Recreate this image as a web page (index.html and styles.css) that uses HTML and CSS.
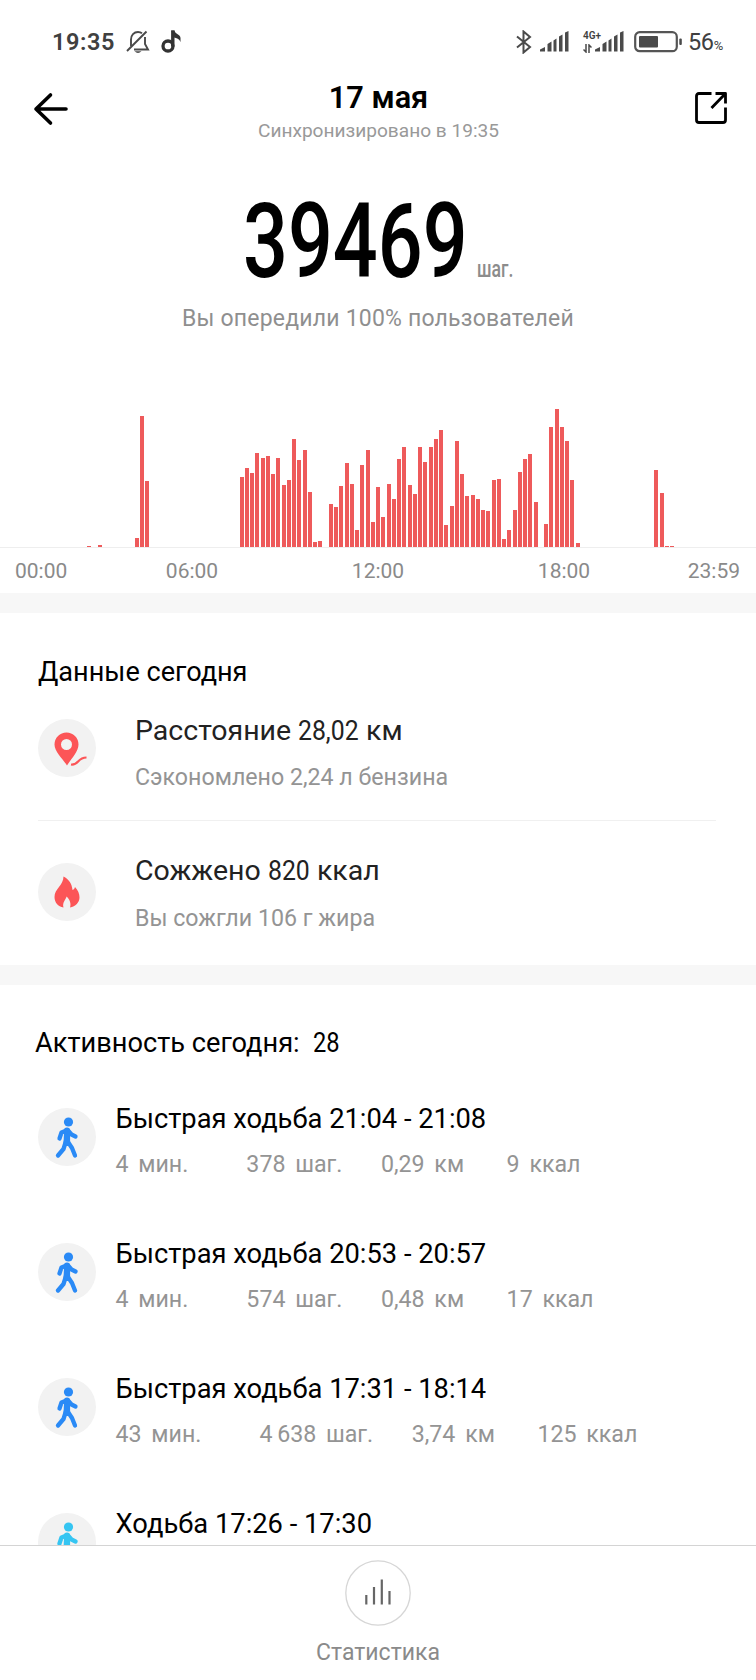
FILE: index.html
```
<!DOCTYPE html>
<html lang="ru">
  <head>
    <meta charset="UTF-8" />
    <meta name="viewport" content="width=device-width, initial-scale=1.0" />
    <title>Шаги</title>
    <link rel="stylesheet" href="styles.css">
  </head>
  <body>
    <!-- Shared icons -->
    <svg class="sprite" width="0" height="0">
      <symbol id="walk" viewBox="0 0 58 58">
        <circle cx="30.5" cy="14" r="4.6" fill="currentColor" />
        <path d="M26 21.5Q29 19.5 31.5 21.5L32 31L30 36H25.5L26 27Z" fill="currentColor" />
        <path d="M28.5 22.5L23.5 24.5L21.5 30.5M30 22.5L33.5 26.5L37.5 28.5M28 33L25.5 41L20 47.5M30 34L34 40L37 47.5" fill="none" stroke="currentColor" stroke-width="4.3" stroke-linecap="round" stroke-linejoin="round" />
        <path d="M29 22.5V35" stroke="currentColor" stroke-width="6.2" stroke-linecap="round" />
      </symbol>
      <symbol id="signal" viewBox="0 0 29 21">
        <path d="M0 20.5V18.5L5 16V20.5ZM7.5 20.5V13L11.5 10.5V20.5ZM13.5 20.5V9.5L16.5 7.5V20.5ZM19 20.5V5.5L22.5 3.5V20.5ZM25 20.5V1.5L28.5 0V20.5Z" fill="#4a4a4a" />
      </symbol>
    </svg>

    <div class="screen">
      <div class="status-bar">
        <span class="clock">19:35</span>
        <svg class="bell" width="24" height="24" viewBox="0 0 24 24" fill="none" stroke="#4a4a4a" stroke-width="1.9">
          <path d="M5 16V9.5C5 5 8 2 12 2C13.5 2 15 2.5 16 3.3M19 7V14L22 19.5H8" />
          <path d="M1 21L20.5 1.5" />
          <path d="M8.5 21.3H15.5Q12 24.6 8.5 21.3Z" fill="#4a4a4a" stroke="none" />
        </svg>
        <svg class="note" width="20" height="24" viewBox="0 0 20 24" fill="none" stroke="#333">
          <circle cx="7" cy="16" r="5" stroke-width="3.3" />
          <path d="M11.8 .5V16.5" stroke-width="3.4" />
          <path d="M10.2 .5H13.5C14 4 19.5 4.5 19.5 8V12C18.5 9 15.5 8 13 7.5Z" fill="#333" stroke="none" />
        </svg>
        <div class="status-right">
          <svg class="bluetooth" width="16" height="24" viewBox="0 0 16 24" fill="none" stroke="#4a4a4a" stroke-width="2">
            <path d="M1 6.5L14 17L7.5 22.5V1.5L14 7L1 17.5" />
          </svg>
          <svg class="signal" width="29" height="21"><use href="#signal" /></svg>
          <div class="network">
            <span>4G+</span>
            <svg width="9" height="9" viewBox="0 0 9 9" fill="none" stroke="#4a4a4a" stroke-width="1.5">
              <path d="M3 0V8L.5 5.5M6 9V1L8.5 3.5" />
            </svg>
          </div>
          <svg class="signal-second" width="29" height="21"><use href="#signal" /></svg>
          <svg class="battery" width="49" height="22" viewBox="0 0 49 22">
            <rect x="1.2" y="1.2" width="41.6" height="19" rx="4.5" fill="none" stroke="#555" stroke-width="2.2" />
            <rect x="5" y="5" width="19" height="11.5" rx="1" fill="#4a4a4a" />
            <rect x="45.3" y="7.5" width="2.5" height="6.5" rx="1" fill="#4a4a4a" />
          </svg>
          <span class="charge">56<small>%</small></span>
        </div>
      </div>

      <header class="header">
        <svg class="back" width="36" height="34" viewBox="0 0 36 34" fill="none" stroke="#000" stroke-width="3.6" stroke-linecap="round" stroke-linejoin="round">
          <path d="M17.5 3L3 17L17.5 31M3 17H33" />
        </svg>
        <div class="heading">
          <h1>17 мая</h1>
          <p>Синхронизировано в 19:35</p>
        </div>
        <svg width="34" height="34" viewBox="0 0 34 34" fill="none" stroke="#000" stroke-width="2.8" stroke-linejoin="round">
          <path d="M17.5 2.5H5Q2.5 2.5 2.5 5V29Q2.5 31.5 5 31.5H29Q31.5 31.5 31.5 29V16.5" />
          <path d="M21.5 2.5H31.5V12.5M31.5 2.5L17.5 17" />
        </svg>
      </header>

      <main class="content">
        <section class="summary">
          <div class="total">
            <span class="total-value">39469</span>
            <span class="total-unit">шаг.</span>
          </div>
          <p class="rank">Вы опередили 100% пользователей</p>
          <div class="chart"></div>
          <div class="hours">
            <span>00:00</span>
            <span>06:00</span>
            <span>12:00</span>
            <span>18:00</span>
            <span>23:59</span>
          </div>
        </section>

        <section class="today">
          <h2>Данные сегодня</h2>
          <div class="metric">
            <svg class="icon" width="58" height="58" viewBox="0 0 58 58">
              <path d="M29 46.5C25 40 16.5 33 16.5 25.5A12 12 0 0 1 40.5 25.5C40.5 33 33 40 29 46.5ZM28.5 20A5.5 5.5 0 1 0 28.5 31A5.5 5.5 0 1 0 28.5 20Z" fill="#fc5557" fill-rule="evenodd" />
              <path d="M33 45.5C41 46.5 39 38.5 48.5 38.5" fill="none" stroke="#fc5557" stroke-width="2.2" />
            </svg>
            <div>
              <h3>Расстояние <span class="distance">28,02</span> км</h3>
              <p>Сэкономлено 2,24 л бензина</p>
            </div>
          </div>
          <div class="metric">
            <svg class="icon" width="58" height="58" viewBox="0 0 58 58">
              <path d="M25.5 13.5C30.5 16 34 20.5 34.5 27C36 26.5 36.5 25.5 37 24C40 27 41.5 31 41.5 34.5C41.5 39.5 37.5 43.5 32 44.5C33.5 40.5 31.5 36 28.5 33.5C28 36.5 24 39.5 25.5 44.5C20 43.5 16.5 39.5 16.5 34C16.5 25.5 25.5 22.5 25.5 13.5Z" fill="#fc5557" />
            </svg>
            <div>
              <h3>Сожжено <span class="calories">820</span> ккал</h3>
              <p>Вы сожгли 106 г жира</p>
            </div>
          </div>
        </section>

        <section class="activity">
          <h2>Активность сегодня: <span class="count">28</span></h2>
          <div class="workout">
            <svg class="icon fast" width="58" height="58"><use href="#walk" /></svg>
            <div>
              <h3>Быстрая ходьба 21:04 - 21:08</h3>
              <p class="stats"><span>4 мин.</span><span>378 шаг.</span><span>0,29 км</span><span>9 ккал</span></p>
            </div>
          </div>
          <div class="workout">
            <svg class="icon fast" width="58" height="58"><use href="#walk" /></svg>
            <div>
              <h3>Быстрая ходьба 20:53 - 20:57</h3>
              <p class="stats"><span>4 мин.</span><span>574 шаг.</span><span>0,48 км</span><span>17 ккал</span></p>
            </div>
          </div>
          <div class="workout">
            <svg class="icon fast" width="58" height="58"><use href="#walk" /></svg>
            <div>
              <h3>Быстрая ходьба 17:31 - 18:14</h3>
              <p class="stats"><span>43 мин.</span><span>4&#8201;638 шаг.</span><span>3,74 км</span><span>125 ккал</span></p>
            </div>
          </div>
          <div class="workout">
            <svg class="icon slow" width="58" height="58"><use href="#walk" /></svg>
            <div>
              <h3>Ходьба 17:26 - 17:30</h3>
            </div>
          </div>
        </section>
      </main>

      <footer class="footer">
        <svg width="66" height="66" viewBox="0 0 66 66" fill="none">
          <circle cx="33" cy="33" r="32.2" stroke="#d6d6d6" stroke-width="1.3" />
          <path d="M21.3 35V44.5M29 27V44.5M36.8 19.5V44.5M44.5 31V44.5" stroke="#666" stroke-width="2.2" />
        </svg>
        <span>Статистика</span>
      </footer>
    </div>

    <script>
      // Bar heights in px, keyed by the first 10-minute slot of each run
      const runs = {
        16: [1],
        18: [2],
        25: [9, 131, 66],
        45: [70, 79, 74, 94, 89, 91, 73, 89, 62, 67, 108, 87, 97, 55, 5, 6],
        62: [43, 40, 61, 84, 63, 17, 82, 97, 25, 60, 30, 63, 48, 88, 100, 62, 53,
             100, 85, 100, 108, 117, 22, 41, 106, 73, 51, 52, 48, 37, 36, 67, 68,
             8, 17, 37, 75, 88, 93, 45],
        103: [23, 120, 138, 120, 106, 67, 4],
        124: [77, 54, 1, 1],
      };
      const heights = new Array(144).fill(0);
      for (const start in runs) {
        runs[start].forEach((h, i) => {
          heights[Number(start) + i] = h;
        });
      }

      const chart = document.querySelector(".chart");
      heights.forEach((h) => {
        const bar = document.createElement("div");
        bar.className = "bar";
        bar.style.height = `${h}px`;
        chart.appendChild(bar);
      });
    </script>
  </body>
</html>
```
FILE: styles.css
```
* {
  box-sizing: border-box;
  margin: 0;
  padding: 0;
}

body {
  background-color: #fff;
  font-family: Roboto, "Liberation Sans", sans-serif;
  color: #000;
}

svg {
  display: block;
  flex-shrink: 0;
}

h1,
h2,
h3 {
  font-weight: 400;
}

.sprite {
  display: none;
}

.screen {
  display: flex;
  flex-direction: column;
  width: 756px;
  height: 1680px;
  overflow: hidden;
  white-space: nowrap;
}

/* Status bar */
.status-bar {
  display: flex;
  align-items: center;
  height: 70px;
  padding: 13px 32px 0 52px;
  color: #404040;
}

.clock {
  width: 74px;
  font-size: 23.5px;
  font-weight: 600;
  letter-spacing: 0.6px;
}

.note {
  margin-left: 11px;
}

.status-right {
  display: flex;
  align-items: center;
  margin-left: auto;
}

.signal {
  margin-left: 8px;
}

.network {
  display: flex;
  flex-direction: column;
  gap: 3px;
  width: 12px;
  margin-left: 14px;
  font-size: 10px;
  font-weight: 600;
  line-height: 10px;
}

.battery {
  margin-left: 10px;
}

.charge {
  width: 36px;
  margin-left: 5px;
  font-size: 23.5px;
  letter-spacing: -0.4px;
}

.charge small {
  font-size: 13px;
}

/* Header */
.header {
  display: flex;
  justify-content: space-between;
  height: 100px;
  padding: 21px 28px 0 33px;
}

.back {
  margin-top: 1px;
}

.heading {
  margin: -12px 6px 0 0;
  text-align: center;
}

.heading h1 {
  font-size: 30.7px;
  font-weight: 600;
  line-height: 37px;
}

.heading p {
  margin-top: 3px;
  font-size: 19.1px;
  line-height: 24px;
  color: #999;
}

.content {
  flex: 1;
  min-height: 0;
  overflow: hidden;
}

/* Steps and chart */
.summary {
  height: 443px;
  border-bottom: 20px solid #f7f7f7;
}

.total {
  display: flex;
  align-items: baseline;
  height: 133px;
  padding-left: 243px;
}

.total-value {
  width: 234px;
  font-size: 104px;
  font-weight: 500;
  line-height: 144px;
  transform: scaleX(0.76);
  transform-origin: left;
}

.total-unit {
  font-size: 23px;
  font-weight: 500;
  color: #8c8c8c;
  transform: scaleX(0.77);
  transform-origin: left;
}

.rank {
  height: 32px;
  font-size: 23px;
  line-height: 32px;
  letter-spacing: 0.2px;
  text-align: center;
  color: #8f8f8f;
}

.chart {
  display: flex;
  align-items: flex-end;
  gap: 1.25px;
  height: 213px;
  padding-left: 3.3px;
  border-bottom: 1px solid #eee;
}

.bar {
  flex: 0 0 4px;
  background-color: #ee5a5b;
}

.hours {
  display: grid;
  grid-template-columns: 99px 186px 186px 186px 99px;
  padding-top: 11px;
  font-size: 21px;
  line-height: 24px;
  text-align: center;
  color: #8a8a8a;
}

.hours span:first-child {
  padding-left: 15px;
  text-align: left;
}

.hours span:last-child {
  padding-right: 16px;
  text-align: right;
}

/* Distance and calories */
.today {
  height: 372px;
  padding: 39px 40px 0 38px;
  border-bottom: 20px solid #f7f7f7;
}

.today h2 {
  height: 62px;
  font-size: 27.1px;
  line-height: 40px;
}

.metric {
  display: flex;
  gap: 39px;
  height: 106px;
  padding-top: 5px;
}

.metric + .metric {
  height: 130px;
  padding-top: 42px;
  border-top: 1px solid #f0f0f0;
}

.icon {
  border-radius: 50%;
  background-color: #f2f2f2;
}

.metric h3 {
  margin-top: -6px;
  font-size: 28.5px;
  line-height: 36px;
  color: #222;
}

.metric p {
  margin-top: 11px;
  font-size: 23.2px;
  line-height: 34px;
  color: #949494;
}

.metric + .metric h3 {
  margin-top: -10px;
}

/* Numbers are set narrower than the words around them */
.distance,
.calories,
.count {
  display: inline-block;
  transform: scaleX(0.87);
  transform-origin: left;
}

.distance {
  margin-right: -9px;
}

.calories {
  margin-right: -6px;
}

.metric + .metric p {
  margin-top: 12px;
}

/* Activities */
.activity {
  padding: 38px 38px 0;
}

.activity h2 {
  height: 84px;
  margin-left: -3px;
  font-size: 27.2px;
  line-height: 40px;
}

.count {
  margin-left: 7px;
}

.workout {
  display: flex;
  gap: 19.5px;
  height: 135px;
}

.workout .icon {
  margin-top: 1px;
}

.workout h3 {
  margin-top: -6px;
  font-size: 27.3px;
  line-height: 36px;
}

.stats {
  display: flex;
  margin-top: 11px;
  font-size: 23.2px;
  line-height: 32px;
  word-spacing: 4px;
  color: #949494;
}

.stats span:nth-child(2) {
  margin-left: 58px;
}

.stats span:nth-child(3) {
  margin-left: 38.5px;
}

.stats span:nth-child(4) {
  margin-left: 42.5px;
}

.fast {
  color: #2a8af6;
}

.slow {
  color: #35c5f2;
}

/* Bottom bar */
.footer {
  display: flex;
  flex-direction: column;
  align-items: center;
  gap: 11px;
  height: 135px;
  padding-top: 14px;
  border-top: 1px solid #d4d4d4;
  background-color: #fff;
  font-size: 23px;
  line-height: 32px;
  color: #8a8a8a;
}
```
